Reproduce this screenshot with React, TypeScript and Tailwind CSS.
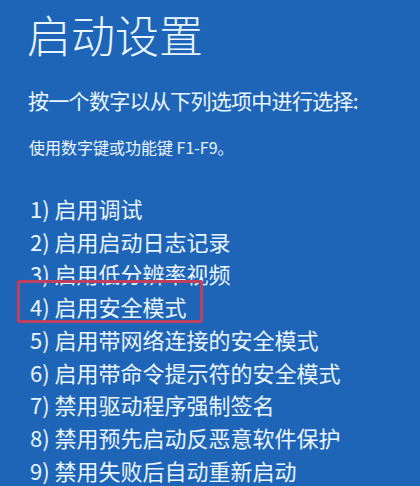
import React from "react";

const items = [
  "1) 启用调试",
  "2) 启用启动日志记录",
  "3) 启用低分辨率视频",
  "4) 启用安全模式",
  "5) 启用带网络连接的安全模式",
  "6) 启用带命令提示符的安全模式",
  "7) 禁用驱动程序强制签名",
  "8) 禁用预先启动反恶意软件保护",
  "9) 禁用失败后自动重新启动",
];

export default function App() {
  return (
    <div
      className="w-[420px] h-[486px] overflow-hidden bg-[#1f65b7] text-[#e9f5ff] pl-[27px]"
      style={{ fontFamily: '"Noto Sans CJK SC", "Noto Sans", sans-serif' }}
    >
      <div className="pt-[12px] text-[44px] leading-[44px] font-light">启动设置</div>
      <div className="mt-[30px] text-[21px] leading-[28px] pl-[1px] tracking-[-0.7px]">按一个数字以从下列选项中进行选择:</div>
      <div className="mt-[22px] text-[16px] leading-[22px] pl-[2px]">使用数字键或功能键 F1-F9。</div>
      <ul className="mt-[34px] pl-[3px] text-[22px] leading-[32.7px]">
        {items.map((t, i) => (
          <li key={i} className="relative">
            {i === 3 && (
              <span className="absolute left-[-13px] top-[-10px] w-[186px] h-[43px] border-[3px] border-[#bf3f5f] rounded-[2px]" />
            )}
            <span className="relative">{t}</span>
          </li>
        ))}
      </ul>
    </div>
  );
}
